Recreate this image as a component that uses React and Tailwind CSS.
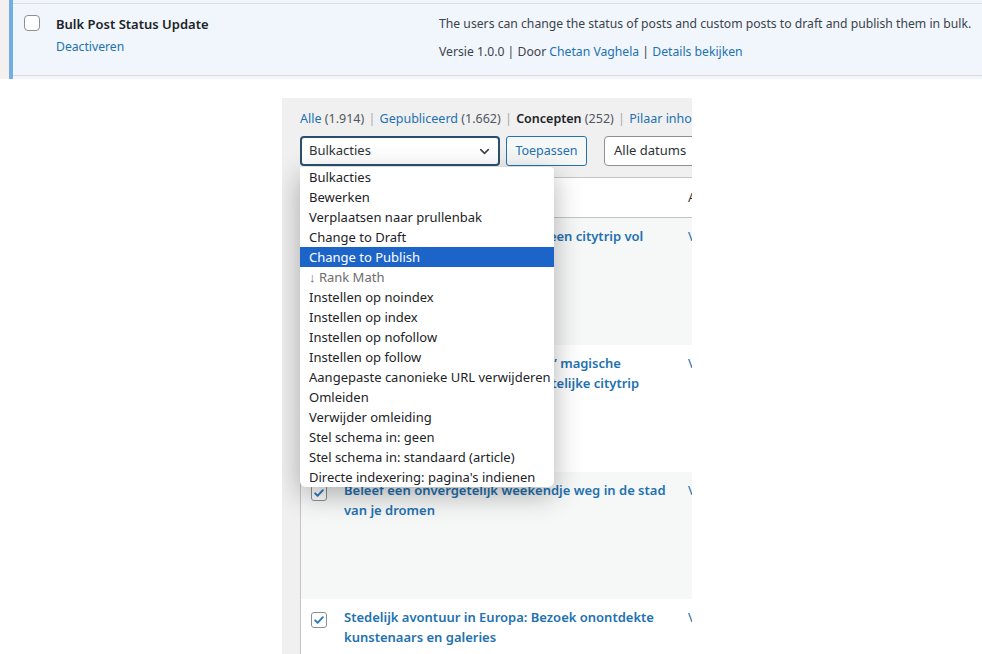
import { ChevronDown } from 'lucide-react';

const bulkOptions = [
  'Bulkacties',
  'Bewerken',
  'Verplaatsen naar prullenbak',
  'Change to Draft',
  'Change to Publish',
  '↓ Rank Math',
  'Instellen op noindex',
  'Instellen op index',
  'Instellen op nofollow',
  'Instellen op follow',
  'Aangepaste canonieke URL verwijderen',
  'Omleiden',
  'Verwijder omleiding',
  'Stel schema in: geen',
  'Stel schema in: standaard (article)',
  "Directe indexering: pagina's indienen",
];

const posts = [
  { title: ['Ontdek de mooiste plekjes voor een citytrip vol', 'cultuur'], bg: 'bg-[#f6f7f7]' },
  { title: ['Ervaar de sferen van de ‘winterse’ magische', 'sfeer van steden op een onvergetelijke citytrip'], bg: 'bg-white' },
  { title: ['Beleef een onvergetelijk weekendje weg in de stad', 'van je dromen'], bg: 'bg-[#f6f7f7]' },
  { title: ['Stedelijk avontuur in Europa: Bezoek onontdekte', 'kunstenaars en galeries'], bg: 'bg-white' },
];

function Checkbox({ checked }) {
  return (
    <span className="flex h-4 w-4 items-center justify-center rounded-[3px] border border-[#8c8f94] bg-white">
      {checked && (
        <svg viewBox="0 0 20 20" className="h-[14px] w-[14px]">
          <path d="M4.5 10.5l3.5 3.5 7.5-8" fill="none" stroke="#2f7bc0" strokeWidth="2.8" strokeLinecap="round" strokeLinejoin="round" />
        </svg>
      )}
    </span>
  );
}

function PluginRow() {
  return (
    <div className="flex h-[79px] bg-[#f0f6fc]">
      <div className="w-[9px] bg-[#f3f0ef]" />
      <div className="w-[4px] bg-[#72aee6]" />
      <div className="flex flex-1 flex-col">
        <div className="mt-[3px] h-px bg-[#dcdcde]" />
        <div className="flex flex-1">
          <div className="shrink-0 pl-[11px] pt-[11px]">
            <span className="block h-4 w-4 rounded-[4px] border border-[#8c8f94] bg-white" />
          </div>
          <div className="w-[399px] shrink-0 pl-[16px] pt-[10px]">
            <div className="text-[13px] font-semibold leading-[20px] text-[#1d2327]">Bulk Post Status Update</div>
            <div className="mt-[3px] text-[12.2px] leading-[20px] text-[#2271b1]">Deactiveren</div>
          </div>
          <div className="whitespace-nowrap pt-[10px] text-[12.2px] leading-[20px] text-[#3c434a]">
            <div>The users can change the status of posts and custom posts to draft and publish them in bulk.</div>
            <div className="mt-[8px]">
              Versie 1.0.0 | Door <span className="text-[#2271b1]">Chetan Vaghela</span> | <span className="text-[#2271b1]">Details bekijken</span>
            </div>
          </div>
        </div>
        <div className="mb-[3px] h-px bg-[#dcdcde]" />
      </div>
    </div>
  );
}

function PostsPanel() {
  return (
    <div className="relative ml-[282px] mt-[19px] h-[556px] w-[410px] overflow-hidden bg-[#f0f0f1] pl-[18px]">
      <div className="whitespace-nowrap pt-[11px] text-[12.5px] leading-[20px] text-[#50575e]">
        <span className="text-[#2271b1]">Alle</span> (1.914) <span className="px-px text-[#a7aaad]">|</span>{' '}
        <span className="text-[#2271b1]">Gepubliceerd</span> (1.662) <span className="px-px text-[#a7aaad]">|</span>{' '}
        <span className="font-semibold text-[#1d2327]">Concepten</span> (252) <span className="px-px text-[#a7aaad]">|</span>{' '}
        <span className="text-[#2271b1]">Pilaar inhoud</span>
      </div>
      <div className="mt-[7px] flex gap-[6px] whitespace-nowrap">
        <div className="flex h-[30px] w-[200px] shrink-0 items-center justify-between rounded-[4px] border-2 border-[#2c4f70] bg-white pl-[7px] pr-[6px] text-[13px] text-[#2c3338]">
          <span>Bulkacties</span>
          <ChevronDown size={15} strokeWidth={2.5} className="text-[#3c434a]" />
        </div>
        <div className="flex h-[30px] w-[81px] shrink-0 items-center justify-center rounded-[3px] border border-[#2271b1] bg-[#f6f7f7] text-[12.5px] text-[#2271b1]">
          Toepassen
        </div>
        <div className="ml-[11px] flex h-[30px] w-[120px] shrink-0 items-center rounded-[4px] border border-[#8c8f94] bg-white pl-[9px] text-[13px] text-[#2c3338]">
          Alle datums
        </div>
      </div>
      <div className="mt-[11px] w-[600px] border-l border-t border-[#c3c4c7] bg-white">
        <div className="flex h-[40px] items-center border-b border-[#c3c4c7]">
          <div className="w-[387px] shrink-0" />
          <div className="text-[13px] text-[#2c3338]">Auteur</div>
        </div>
        {posts.map((post, i) => (
          <div key={i} className={`flex h-[127px] ${post.bg}`}>
            <div className="w-[43px] shrink-0 pl-[10px] pt-[13px]">
              <Checkbox checked />
            </div>
            <div className="w-[344px] shrink-0 whitespace-nowrap pt-[9px] text-[13px] font-semibold leading-[19.5px] text-[#2271b1]">
              <div>{post.title[0]}</div>
              <div>{post.title[1]}</div>
            </div>
            <div className="pt-[9px] text-[13px] leading-[19.5px] text-[#2271b1]">Vera</div>
          </div>
        ))}
      </div>
      <div className="absolute left-[18px] top-[69px] w-[254px] overflow-hidden rounded-b-[6px] rounded-tr-[4px] bg-white shadow-[0_8px_28px_rgba(0,0,0,0.3)]">
        {bulkOptions.map((opt, i) => (
          <div
            key={i}
            className={`h-[20px] whitespace-nowrap pl-[9px] text-[13px] leading-[20px] ${
              i === 4 ? 'bg-[#1d64c9] text-white' : i === 5 ? 'text-[#6d6d6d]' : 'text-[#1d2327]'
            }`}
          >
            {opt}
          </div>
        ))}
      </div>
    </div>
  );
}

export default function App() {
  return (
    <div className="h-[654px] w-[982px] overflow-hidden bg-white font-['Noto_Sans',sans-serif]">
      <PluginRow />
      <PostsPanel />
    </div>
  );
}
